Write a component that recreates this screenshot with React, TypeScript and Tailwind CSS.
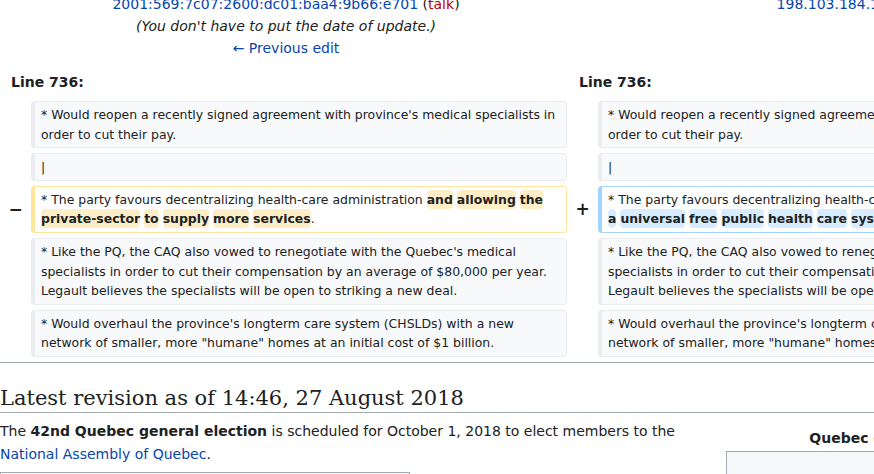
const LINK = "text-[#0645ad]";

type Part = string | { hl: string };

interface DiffRow {
  marker?: { left?: string; right?: string };
  left: { kind: "context" | "deleted"; parts: Part[] };
  right: { kind: "context" | "added"; parts: Part[] };
}

const reopen = "* Would reopen a recently signed agreement with province's medical specialists in order to cut their pay.";
const caq =
  "* Like the PQ, the CAQ also vowed to renegotiate with the Quebec's medical specialists in order to cut their compensation by an average of $80,000 per year. Legault believes the specialists will be open to striking a new deal.";
const overhaul =
  "* Would overhaul the province's longterm care system (CHSLDs) with a new network of smaller, more \"humane\" homes at an initial cost of $1 billion.";

const rows: DiffRow[] = [
  { left: { kind: "context", parts: [reopen] }, right: { kind: "context", parts: [reopen] } },
  { left: { kind: "context", parts: ["|"] }, right: { kind: "context", parts: ["|"] } },
  {
    marker: { left: "−", right: "+" },
    left: {
      kind: "deleted",
      parts: [
        "* The party favours decentralizing health-care administration ",
        { hl: "and" }, " ", { hl: "allowing" }, " ", { hl: "the" }, " ",
        { hl: "private-sector" }, " ", { hl: "to" }, " ", { hl: "supply" }, " ",
        { hl: "more" }, " ", { hl: "services" }, ".",
      ],
    },
    right: {
      kind: "added",
      parts: [
        "* The party favours decentralizing health-care administration ",
        { hl: "while" }, " ", { hl: "maintaining" }, " ", { hl: "a" }, " ",
        { hl: "universal" }, " ", { hl: "free" }, " ", { hl: "public" }, " ",
        { hl: "health" }, " ", { hl: "care" }, " ", { hl: "system" }, ".",
      ],
    },
  },
  { left: { kind: "context", parts: [caq] }, right: { kind: "context", parts: [caq] } },
  { left: { kind: "context", parts: [overhaul] }, right: { kind: "context", parts: [overhaul] } },
];

const boxStyle = {
  context: "bg-[#f8f9fa] border-[#eaecf0]",
  deleted: "bg-white border-[#ffe49c]",
  added: "bg-white border-[#a3d3ff]",
};

const hlStyle = {
  context: "",
  deleted: "bg-[#feeec8]",
  added: "bg-[#d8ecff]",
};

const DiffBox = ({ kind, parts }: { kind: "context" | "deleted" | "added"; parts: Part[] }) => (
  <div
    className={`border border-l-4 rounded-[4px] px-[6px] py-[3px] text-[12.45px] leading-[19.6px] text-[#202122] ${boxStyle[kind]}`}
  >
    {parts.map((p, i) =>
      typeof p === "string" ? (
        <span key={i}>{p}</span>
      ) : (
        <span key={i} className={`font-bold rounded-[4px] py-[2px] ${hlStyle[kind]}`}>
          {p.hl}
        </span>
      )
    )}
  </div>
);

const Marker = ({ sign }: { sign?: string }) => (
  <div className="flex items-center justify-center text-[17px] font-bold text-[#202122]">{sign}</div>
);

export default function App() {
  return (
    <div className="w-[874px] h-[474px] overflow-hidden bg-white text-[#202122] font-['DejaVu_Sans',sans-serif]">
      <div className="w-[1134px]">
        {/* revision headers */}
        <div className="grid grid-cols-[567px_567px] -mt-[7px] text-[14px] leading-[22px] text-center">
          <div className="pl-[5px]">
            <div>
              <span className={LINK}>2001:569:7c07:2600:dc01:baa4:9b66:e701</span> (
              <span className="text-[#ba0000]">talk</span>)
            </div>
            <div className="italic">(You don't have to put the date of update.)</div>
            <div className={LINK}>← Previous edit</div>
          </div>
          <div className="pl-[5px]">
            <div>
              <span className={LINK}>198.103.184.10</span> (<span className={LINK}>talk</span>)
            </div>
          </div>
        </div>

        <div className="grid grid-cols-[567px_567px] mt-[12px] text-[14px] leading-[22px] font-bold">
          <div className="pl-[11px]">Line 736:</div>
          <div className="pl-[12px]">Line 736:</div>
        </div>

        <div className="grid grid-cols-[31px_536px_31px_536px] gap-y-[5px] mt-[8px]">
          {rows.map((r, i) => (
            <div key={i} className="contents">
              <Marker sign={r.marker?.left} />
              <DiffBox kind={r.left.kind} parts={r.left.parts} />
              <Marker sign={r.marker?.right} />
              <DiffBox kind={r.right.kind} parts={r.right.parts} />
            </div>
          ))}
        </div>

        <div className="h-px bg-[#a2a9b1] mt-[5px]" />

        <h2 className="mt-[22px] font-['DejaVu_Serif',serif] text-[21px] leading-[1.3] border-b border-[#a2a9b1]">
          Latest revision as of 14:46, 27 August 2018
        </h2>

        <div className="flex">
          <div className="w-[726px] pr-[14px]">
            <p className="mt-[7px] text-[14px] leading-[22.4px]">
              The <b>42nd Quebec general election</b> is scheduled for October 1, 2018 to elect members to the{" "}
              <span className={LINK}>National Assembly of Quebec</span>.
            </p>
            <div className="mt-[7px] w-[410px] h-[40px] border border-[#a2a9b1] bg-[#f8f9fa]" />
          </div>
          <div className="w-[408px] mt-[16px]">
            <div className="text-center font-bold text-[14px] leading-[18px] pb-[4px]">
              Quebec general election, 2018
            </div>
            <div className="h-[60px] border border-[#a2a9b1] bg-[#f8f9fa]" />
          </div>
        </div>
      </div>
    </div>
  );
}
